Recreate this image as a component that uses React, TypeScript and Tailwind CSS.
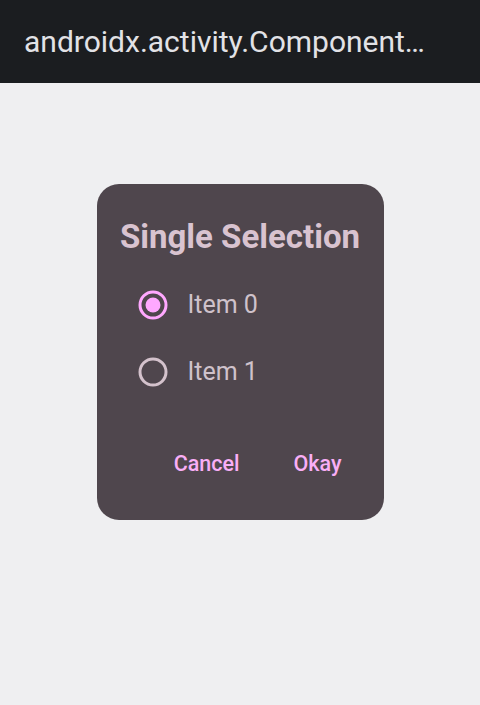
import React, { useState } from 'react';

const items = ['Item 0', 'Item 1'];

const Radio = ({ checked }: { checked: boolean }) => (
  <svg width="30" height="30" viewBox="0 0 30 30">
    <circle cx="15" cy="15" r="13" fill="none" stroke={checked ? '#ffa8ff' : '#d4c2cc'} strokeWidth="3" />
    {checked && <circle cx="15" cy="15" r="7.5" fill="#ffa8ff" />}
  </svg>
);

export default function App() {
  const [selected, setSelected] = useState(0);

  return (
    <div className="w-[480px] h-[705px] flex flex-col bg-[#efeff1] font-['Roboto',sans-serif]">
      <div className="h-[83px] shrink-0 bg-[#1b1d20] flex items-center pl-[24px]">
        <span className="text-[30px] text-[#e2e2e6] leading-none">androidx.activity.Component…</span>
      </div>
      <div className="flex justify-center pt-[101px]">
        <div className="w-[287px] h-[336px] rounded-[22px] bg-[#4f464d] flex flex-col pt-[35px]">
          <h2 className="text-center text-[33px] font-bold text-[#d9c3d0] leading-[36px]">Single Selection</h2>
          <div className="flex flex-col mt-[35px] gap-[37px] pl-[41px]">
            {items.map((item, i) => (
              <div key={i} className="flex items-center h-[30px] cursor-pointer" onClick={() => setSelected(i)}>
                <Radio checked={selected === i} />
                <span className="ml-[20px] text-[25px] text-[#cfc2cb]">{item}</span>
              </div>
            ))}
          </div>
          <div className="flex justify-end items-center gap-[54px] pr-[42px] mt-[63px] h-[28px]">
            <button className="text-[21.5px] font-medium text-[#f9aef6] leading-[28px]">Cancel</button>
            <button className="text-[21.5px] font-medium text-[#f9aef6] leading-[28px]">Okay</button>
          </div>
        </div>
      </div>
    </div>
  );
}
